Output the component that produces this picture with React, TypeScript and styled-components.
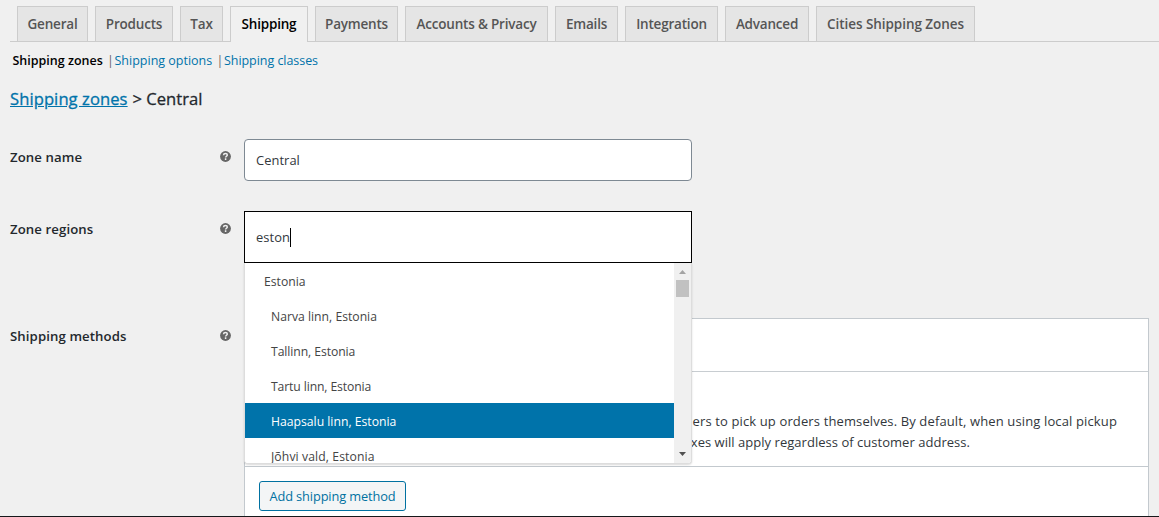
import React from "react";
import styled, { createGlobalStyle } from "styled-components";

const GlobalStyle = createGlobalStyle`
  * { box-sizing: border-box; }
  body {
    margin: 0;
    background: #f0f0f0;
    color: #23282d;
    font-family: "Open Sans", "Noto Sans", sans-serif;
    font-size: 13px;
    overflow: hidden;
  }
`;

const Page = styled.main`
  height: 517px;
  overflow: hidden;
  border-bottom: 1px solid #16181a;
  padding-left: 10px;
`;

const TabBar = styled.nav`
  display: flex;
  gap: 7px;
  height: 42px;
  padding: 6px 0 0 7px;
  border-bottom: 1px solid #ccc;
`;

const Tab = styled.a<{ $width: number; $active?: boolean; $spacing?: number }>`
  flex: none;
  display: flex;
  justify-content: center;
  width: ${(p) => p.$width}px;
  height: ${(p) => (p.$active ? 36 : 35)}px;
  border: 1px solid #ccc;
  border-bottom: 0;
  background: ${(p) => (p.$active ? "#f0f0f0" : "#e5e5e5")};
  color: ${(p) => (p.$active ? "#000" : "#555")};
  font-size: 13.5px;
  font-weight: 600;
  line-height: 34px;
  white-space: nowrap;
  letter-spacing: ${(p) => p.$spacing ?? -0.2}px;
`;

const SubNav = styled.div`
  display: flex;
  height: 38px;
  padding-left: 2.5px;
  line-height: 38px;
  white-space: nowrap;
`;

const SubLink = styled.a<{ $width: number; $active?: boolean; $spacing: number }>`
  width: ${(p) => p.$width}px;
  color: ${(p) => (p.$active ? "#000" : "#0073aa")};
  font-weight: ${(p) => (p.$active ? 600 : 400)};
  font-size: 12.5px;
  letter-spacing: ${(p) => p.$spacing}px;
`;

const Divider = styled.span`
  width: 7.5px;
  color: #666;
  font-size: 12.5px;
`;

const Title = styled.h2`
  display: flex;
  margin: 0;
  height: 59px;
  padding-top: 7px;
  font-size: 16.6px;
  font-weight: 400;
  line-height: 24px;
  -webkit-text-stroke: 0.3px currentColor;
  white-space: pre;
`;

const TitleLink = styled.a`
  width: 122.5px;
  color: #0073aa;
  text-decoration: underline;
  letter-spacing: 0.07px;
`;

const Row = styled.div<{ $height: number }>`
  display: flex;
  height: ${(p) => p.$height}px;
`;

const Label = styled.label`
  display: flex;
  justify-content: space-between;
  width: 234px;
  padding: 8px 12.6px 0 0;
  font-size: 13.2px;
  font-weight: 600;
  line-height: 20px;
  letter-spacing: 0.1px;
`;

const HelpSvg = styled.svg`
  width: 11px;
  height: 11px;
  margin-top: 4px;
`;

const Field = styled.div<{ $focused?: boolean }>`
  display: flex;
  align-items: center;
  width: 448px;
  height: ${(p) => (p.$focused ? 52 : 42)}px;
  padding-left: 11px;
  border: 1px solid ${(p) => (p.$focused ? "#000" : "#7e8993")};
  border-radius: ${(p) => (p.$focused ? 0 : 4)}px;
  background: #fff;
  color: #32373c;
  font-size: 12.9px;
  letter-spacing: 0.05px;
`;

const Caret = styled.span`
  width: 1px;
  height: 19px;
  background: #000;
`;

const SelectBox = styled.div`
  position: relative;
`;

const Dropdown = styled.div`
  position: absolute;
  z-index: 2;
  top: 52px;
  left: 0;
  display: flex;
  width: 448px;
  height: 201px;
  overflow: hidden;
  border: 1px solid #ddd;
  border-top: 0;
  border-radius: 0 0 4px 4px;
  background: #fff;
  box-shadow: 0 1px 2px rgba(0, 0, 0, 0.15);
`;

const Options = styled.div`
  flex: 1;
`;

const Option = styled.div<{ $child?: boolean; $selected?: boolean; $spacing: number }>`
  height: 35px;
  padding-left: ${(p) => (p.$child ? 26 : 19)}px;
  background: ${(p) => (p.$selected ? "#0073aa" : "#fff")};
  color: ${(p) => (p.$selected ? "#fff" : "#444")};
  font-size: 12.2px;
  line-height: 38px;
  letter-spacing: ${(p) => p.$spacing}px;
`;

const Scrollbar = styled.div`
  display: flex;
  flex-direction: column;
  align-items: center;
  width: 17px;
  background: #f0f0f0;
`;

const Arrow = styled.svg<{ $push?: boolean }>`
  width: 17px;
  height: 17px;
  margin-top: ${(p) => (p.$push ? "auto" : 0)};
`;

const Thumb = styled.div`
  width: 13px;
  height: 17px;
  background: #c1c1c1;
`;

const Panel = styled.section`
  width: 905px;
  height: 220px;
  border: 1px solid #c3c9ce;
  background: #fff;
`;

const PanelHead = styled.div`
  height: 53px;
  border-bottom: 1px solid #c8cdd1;
`;

const Method = styled.div`
  height: 95px;
  padding-top: 39px;
  border-bottom: 1px solid #c3c9ce;
`;

const Line = styled.div<{ $right: number; $spacing: number }>`
  padding-right: ${(p) => p.$right}px;
  text-align: right;
  line-height: 21px;
  color: #32373c;
  white-space: nowrap;
  letter-spacing: ${(p) => p.$spacing}px;
`;

const AddButton = styled.button`
  display: block;
  width: 147px;
  height: 30px;
  margin: 14px;
  padding: 0;
  border: 1px solid #0071a1;
  border-radius: 3px;
  background: #f3f5f6;
  color: #0071a1;
  font: 12.8px "Open Sans", sans-serif;
  letter-spacing: -0.12px;
  white-space: nowrap;
`;

const tabs = [
  { name: "General", width: 71 },
  { name: "Products", width: 78 },
  { name: "Tax", width: 43 },
  { name: "Shipping", width: 78, active: true },
  { name: "Payments", width: 83 },
  { name: "Accounts & Privacy", width: 143 },
  { name: "Emails", width: 63 },
  { name: "Integration", width: 93 },
  { name: "Advanced", width: 84 },
  { name: "Cities Shipping Zones", width: 159, spacing: -0.06 },
];

const options = [
  { name: "Estonia", spacing: 0 },
  { name: "Narva linn, Estonia", child: true, spacing: 0 },
  { name: "Tallinn, Estonia", child: true, spacing: -0.08 },
  { name: "Tartu linn, Estonia", child: true, spacing: -0.12 },
  { name: "Haapsalu linn, Estonia", child: true, selected: true, spacing: 0 },
  { name: "Jõhvi vald, Estonia", child: true, spacing: 0.1 },
];

const Help = () => (
  <HelpSvg viewBox="0 0 11 11">
    <circle cx="5.5" cy="5.5" r="5.4" fill="#666" />
    <path d="M3.5 4.2C3.6 2.9 4.4 2.4 5.5 2.4s1.8.6 1.8 1.6c0 1.3-1.7 1.2-1.7 2.6M5.6 7.3v1.6" fill="none" stroke="#f0f0f0" strokeWidth="1.5" />
  </HelpSvg>
);

export default function App() {
  return (
    <Page>
      <GlobalStyle />
      <TabBar>
        {tabs.map((t) => (
          <Tab key={t.name} $width={t.width} $active={t.active} $spacing={t.spacing}>{t.name}</Tab>
        ))}
      </TabBar>
      <SubNav>
        <SubLink $active $width={94.5} $spacing={0}>Shipping zones</SubLink>
        <Divider>|</Divider>
        <SubLink $width={102} $spacing={0}>Shipping options</SubLink>
        <Divider>|</Divider>
        <SubLink $width={104} $spacing={-0.05}>Shipping classes</SubLink>
      </SubNav>
      <Title>
        <TitleLink>Shipping zones</TitleLink>
        <span>&gt; Central</span>
      </Title>
      <Row $height={72}>
        <Label>Zone name<Help /></Label>
        <Field>Central</Field>
      </Row>
      <Row $height={107}>
        <Label>Zone regions<Help /></Label>
        <SelectBox>
          <Field $focused>eston<Caret /></Field>
          <Dropdown>
            <Options>
              {options.map((o) => (
                <Option key={o.name} $child={o.child} $selected={o.selected} $spacing={o.spacing}>{o.name}</Option>
              ))}
            </Options>
            <Scrollbar>
              <Arrow viewBox="0 0 17 17"><path d="M5 11h7L8.5 7z" fill="#a3a3a3" /></Arrow>
              <Thumb />
              <Arrow $push viewBox="0 0 17 17"><path d="M5 6h7L8.5 10z" fill="#505050" /></Arrow>
            </Scrollbar>
          </Dropdown>
        </SelectBox>
      </Row>
      <Row $height={220}>
        <Label>Shipping methods<Help /></Label>
        <Panel>
          <PanelHead />
          <Method>
            <Line $right={31} $spacing={0.13}>Allow customers to pick up orders themselves. By default, when using local pickup</Line>
            <Line $right={178} $spacing={0.03}>store base taxes will apply regardless of customer address.</Line>
          </Method>
          <AddButton>Add shipping method</AddButton>
        </Panel>
      </Row>
    </Page>
  );
}
